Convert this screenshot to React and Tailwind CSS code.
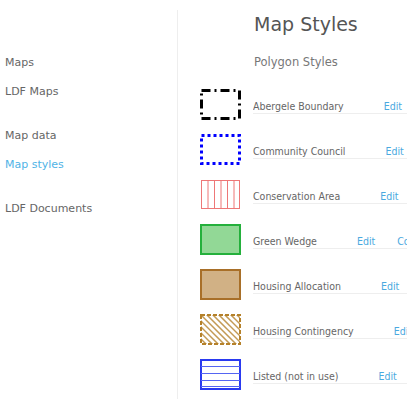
const navGroups = [["Maps", "LDF Maps"], ["Map data", "Map styles"], ["LDF Documents"]];

const styles = [
  { name: "Abergele Boundary", kind: "dashdot" },
  { name: "Community Council", kind: "dotted" },
  { name: "Conservation Area", kind: "vlines" },
  { name: "Green Wedge", kind: "green" },
  { name: "Housing Allocation", kind: "tan" },
  { name: "Housing Contingency", kind: "hatch" },
  { name: "Listed (not in use)", kind: "hlines" },
];

const Swatch = ({ kind }) => {
  return (
    <svg width="41" height="31" viewBox="0 0 41 31" className="shrink-0">
      {kind === "dashdot" && (
        <rect x="1.5" y="1.5" width="38" height="28" fill="#fff" stroke="#000" strokeWidth="3" strokeDasharray="9 4 2 4" />
      )}
      {kind === "dotted" && (
        <rect x="1.5" y="1.5" width="38" height="28" fill="#fff" stroke="#0000ff" strokeWidth="3" strokeDasharray="3 3" />
      )}
      {kind === "vlines" && (
        <g stroke="#e77" strokeWidth="1">
          <rect x="1.5" y="1.5" width="38" height="28" fill="#fff" />
          {[8, 14.5, 21, 27.5, 34].map((x) => (
            <line key={x} x1={x} y1="1.5" x2={x} y2="29.5" />
          ))}
        </g>
      )}
      {kind === "green" && (
        <rect x="1" y="1" width="39" height="29" fill="#92d896" stroke="#24b03c" strokeWidth="2" />
      )}
      {kind === "tan" && (
        <rect x="1" y="1" width="39" height="29" fill="#d1b185" stroke="#a86f28" strokeWidth="2" />
      )}
      {kind === "hatch" && (
        <g>
          <clipPath id="hc">
            <rect x="1" y="1" width="39" height="29" />
          </clipPath>
          <g clipPath="url(#hc)" stroke="#c39a55" strokeWidth="1.5">
            {[-30, -24, -18, -12, -6, 0, 6, 12, 18, 24, 30, 36].map((o) => (
              <line key={o} x1={o} y1="0" x2={o + 31} y2="31" />
            ))}
          </g>
          <rect x="1" y="1" width="39" height="29" fill="none" stroke="#b5812a" strokeWidth="2" strokeDasharray="4 2" />
        </g>
      )}
      {kind === "hlines" && (
        <g>
          <rect x="1" y="1" width="39" height="29" fill="#fff" stroke="#2a3af0" strokeWidth="2" />
          {[7.5, 14.5, 21.5, 27.5].map((y) => (
            <line key={y} x1="1" y1={y} x2="40" y2={y} stroke="#5565f2" strokeWidth="1" />
          ))}
        </g>
      )}
    </svg>
  );
};

const App = () => {
  return (
    <div
      className="flex w-[407px] h-[399px] overflow-hidden bg-white text-[#666]"
      style={{ fontFamily: '"DejaVu Sans", Verdana, sans-serif' }}
    >
      <div className="w-[178px] shrink-0 mt-[10px] border-r border-[#eeeeee] pt-[38px] pl-[5px] text-[11px]">
        {navGroups.map((group, gi) => (
          <div key={gi} className="mb-[15px]">
            {group.map((item) => (
              <div
                key={item}
                className={`h-[29px] leading-[29px] ${item === "Map styles" ? "text-[#4fb3e6]" : "text-[#666]"}`}
              >
                {item}
              </div>
            ))}
          </div>
        ))}
      </div>

      <div className="flex-1 min-w-0 pl-[22px]">
        <h1 className="ml-[54px] mt-[10px] h-[28px] leading-[28px] text-[19px] text-[#555]">Map Styles</h1>
        <h2 className="ml-[54px] mt-[16px] h-[16px] leading-[16px] text-[11.5px] text-[#777]">Polygon Styles</h2>
        <div className="mt-[12px]">
          {styles.map((s) => (
            <div key={s.name} className="flex items-center h-[45px]">
              <Swatch kind={s.kind} />
              <div
                className="ml-[12px] flex-1 min-w-0 flex whitespace-nowrap overflow-hidden border-b border-[#eeeeee] pt-[1px] h-[16px] leading-[14px] text-[10.5px] mt-[2px]"
                style={{ fontFamily: '"DejaVu Sans Condensed", "DejaVu Sans", sans-serif' }}
              >
                <span className="pr-[40px] text-[#666]">{s.name}</span>
                <span className="text-[#4aa9e0]">Edit</span>
                <span className="ml-[22px] text-[#4aa9e0]">Copy</span>
              </div>
            </div>
          ))}
        </div>
      </div>
    </div>
  );
};

export default App;
